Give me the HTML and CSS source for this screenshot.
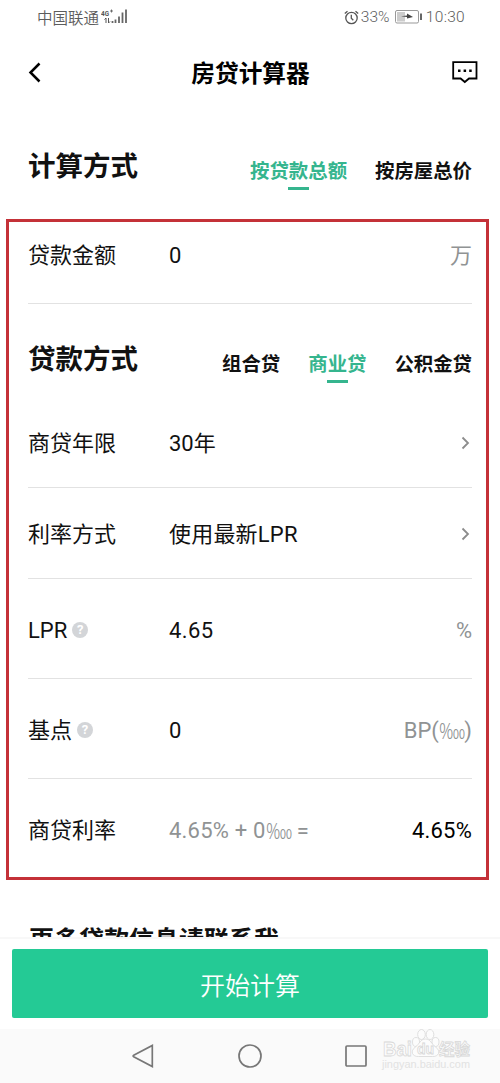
FILE: index.html
```html
<!DOCTYPE html>
<html lang="zh-CN">
<head>
<meta charset="utf-8">
<title>房贷计算器</title>
<link rel="stylesheet" href="styles.css">
</head>
<body>
<div class="phone">
  <div class="status">
    <span class="carrier">中国联通</span>
    <svg class="signal" width="28" height="18" viewBox="0 0 28 18">
      <text x="0" y="7.5" class="net" textLength="8" lengthAdjust="spacingAndGlyphs">4G</text>
      <path d="M9 3h3M10.500 1.500v3" stroke="#555" stroke-width=".8"/>
      <path d="M5 10v5M3.500 11.500L5 10M7.500 10v5M9 13.500L7.500 15" stroke="#555" fill="none"/>
      <path d="M11.500 13v2M14.500 11.500v3.500M18 8.500v6.500M21.500 4.500v10.500M25 1.500v13.500" stroke="#666" stroke-width="1.800"/>
    </svg>
    <span class="spacer"></span>
    <svg class="alarm" width="15" height="15" viewBox="0 0 15 15" fill="none" stroke="#555" stroke-width="1.300">
      <circle cx="7.500" cy="8" r="5.700"/><path d="M7.300 4.800v3.400l2 2M.8 3.500L3.500 1.200M14.200 3.500L11.500 1.200"/>
    </svg>
    <span class="pct">33%</span>
    <svg class="battery" width="28" height="14" viewBox="0 0 28 14">
      <rect x=".5" y=".5" width="23" height="12.500" rx="1.500" fill="#fff" stroke="#999"/>
      <rect x="2" y="2" width="8" height="9.500" fill="#ccc"/>
      <path d="M6 6.200l6-.7v-2l6 3.500-6 1.500v-1.500z" fill="#444"/>
      <path d="M26 3.500v6.500" stroke="#666" stroke-width="2"/>
    </svg>
    <span class="time">10:30</span>
  </div>

  <div class="navbar">
    <svg width="14" height="22" viewBox="0 0 14 22" fill="none" stroke="#000" stroke-width="2.500"><path d="M11.500 2.500L2.500 11.500l9 9"/></svg>
    <h1 class="title">房贷计算器</h1>
    <svg width="26" height="24" viewBox="0 0 26 24"><path d="M1.200 2.200h23.300v16.300h-7.500L12.800 22 8.600 18.500H1.200z" fill="none" stroke="#000" stroke-width="1.800"/><path d="M6 9.500h2.500v2.500H6zM11.600 9.500h2.500v2.500h-2.500zM17.200 9.500h2.500v2.500h-2.500z"/></svg>
  </div>

  <div class="section first">
    <h2 class="heading">计算方式</h2>
    <div class="tabs">
      <span class="tab active">按贷款总额</span>
      <span class="tab">按房屋总价</span>
    </div>
  </div>

  <div class="form">
    <div class="row amount"><span>贷款金额</span><span>0</span><span class="unit">万</span></div>
    <div class="section">
      <h2 class="heading">贷款方式</h2>
      <div class="tabs">
        <span class="tab">组合贷</span>
        <span class="tab active">商业贷</span>
        <span class="tab">公积金贷</span>
      </div>
    </div>
    <div class="row years"><span>商贷年限</span><span>30年</span><svg class="arrow" width="9" height="14" viewBox="0 0 9 14"><path d="M1.500 1.500L7 7l-5.500 5.500"/></svg></div>
    <div class="row method"><span>利率方式</span><span class="wide">使用最新LPR</span><svg class="arrow" width="9" height="14" viewBox="0 0 9 14"><path d="M1.500 1.500L7 7l-5.500 5.500"/></svg></div>
    <div class="row"><span class="label">LPR<i class="help">?</i></span><span class="num">4.65</span><span class="unit">%</span></div>
    <div class="row"><span class="label">基点<i class="help">?</i></span><span>0</span><span class="unit">BP(<span class="bp">‱</span>)</span></div>
    <div class="row result"><span>商贷利率</span><span class="formula">4.65% + 0<span class="bp">‱</span> =</span><span class="value">4.65%</span></div>
  </div>

  <div class="more">更多贷款信息请联系我</div>
  <div class="action"><div class="button">开始计算</div></div>

  <div class="system">
    <svg width="22" height="26" viewBox="0 0 22 26"><path d="M20.300 2.500v21L1.700 13.800q-1.200-.8 0-1.600z"/></svg>
    <svg width="26" height="26" viewBox="0 0 26 26"><circle cx="13" cy="13" r="11"/></svg>
    <svg width="24" height="26" viewBox="0 0 24 26"><rect x="2" y="3" width="20" height="20" rx="1"/></svg>
    <svg class="watermark" width="94" height="44" viewBox="0 0 94 44">
      <g class="paw">
        <ellipse cx="35" cy="14" rx="3.500" ry="4.500"/><ellipse cx="40.500" cy="6.500" rx="3.800" ry="5"/><ellipse cx="49" cy="6.500" rx="3.800" ry="5"/><ellipse cx="54.500" cy="14" rx="3.500" ry="4.500"/>
        <path d="M44.500 11c-5 0-6 5-10 8-6 4-3 10 3 9.500h14c6 .5 9-5.500 3-9.500-4-3-5-8-10-8z"/>
      </g>
      <text x="2" y="28" class="brand" textLength="29" lengthAdjust="spacingAndGlyphs">Bai</text>
      <text x="36" y="26" class="du">du</text>
      <text x="58" y="27" class="cn">经验</text>
      <text x="1" y="40" class="site" textLength="88" lengthAdjust="spacingAndGlyphs">jingyan.baidu.com</text>
    </svg>
  </div>
</div>
</body>
</html>
```
FILE: styles.css
```css
* { box-sizing: border-box; }
body { margin: 0; background: #fff; font-family: Roboto, "Noto Sans CJK SC", sans-serif; color: #111; }
.phone { width: 500px; height: 1083px; display: flex; flex-direction: column; overflow: hidden; }
.phone svg { flex: none; }

.status { height: 34px; flex: none; display: flex; align-items: center; padding: 0 35px 0 37px; font-size: 15.5px; color: #5c5c5c; font-weight: 350; white-space: nowrap; }
.signal { margin-left: 2px; }
.net { font: 700 8px Roboto, sans-serif; fill: #555; }
.spacer { flex: 1; }
.alarm { margin-right: 2px; }
.pct { width: 30px; }
.battery { margin: 0 3px 0 4px; }
.time { letter-spacing: .3px; }

.navbar { height: 76px; flex: none; display: flex; align-items: center; justify-content: space-between; padding: 0 22px 0 28px; }
.title { margin: 4px 0 0; padding-left: 7px; font-size: 23.700px; line-height: 34px; font-weight: 700; color: #000; }

.section { height: 94px; flex: none; display: flex; justify-content: space-between; align-items: flex-start; padding-top: 37px; }
.section.first { height: 109px; padding: 38px 28px 0; }
.heading { margin: 0; font-size: 27.500px; line-height: 38px; font-weight: 700; }
.tabs { display: flex; gap: 28px; padding-top: 9px; }
.tab { font-size: 19.400px; line-height: 30px; font-weight: 700; white-space: nowrap; }
.tab.active { color: #35b58e; display: flex; flex-direction: column; align-items: center; }
.tab.active::after { content: ""; width: 21px; height: 3px; background: #35b58e; }

.form { width: 483px; height: 661px; flex: none; margin-left: 6px; border: 3px solid #c43138; padding: 0 14px 0 19px; }
.row { height: 100px; display: grid; grid-template-columns: 141px 1fr auto; align-items: center; border-bottom: 1px solid #e2e2e2; font-size: 22px; line-height: 32px; font-weight: 380; white-space: nowrap; padding-top: 5px; }
.amount { height: 82px; padding: 0 0 13px; }
.years { height: 90px; padding-top: 2px; }
.method { height: 91px; padding-top: 4px; }
.result { border: 0; padding-top: 4px; }
.label { display: flex; align-items: center; }
.help { width: 16px; height: 16px; margin: 0 0 2px 5px; border-radius: 50%; background: #d3d5d8; color: #fff; font-size: 13px; font-weight: 700; font-style: normal; line-height: 16px; text-align: center; }
.num { letter-spacing: .4px; }
.wide { letter-spacing: .2px; }
.unit, .formula { color: #909394; }
.formula { letter-spacing: .2px; }
.bp { display: inline-block; width: 25.500px; height: 32px; margin-top: -1px; vertical-align: top; font-family: "Noto Sans", "Open Sans", sans-serif; font-weight: 300; transform-origin: left; transform: scaleX(.8); }
.value { color: #000; letter-spacing: .2px; }
.arrow { fill: none; stroke: #8c8c8c; stroke-width: 1.800; margin: 0 2px 2px 0; }

.more { height: 57px; flex: none; overflow: hidden; padding: 42px 0 0 29px; font-size: 25px; line-height: 37px; font-weight: 700; }
.action { height: 92px; flex: none; padding: 10px 12px 0; border-top: 2px solid #f8f8f8; background: #fff; }
.button { height: 69px; border-radius: 2px; background: #24ca95; color: #fff; font-size: 25px; line-height: 75px; font-weight: 350; text-align: center; }

.system { flex: 1; display: flex; align-items: center; background: #fafafa; padding-left: 132px; }
.system > svg { fill: none; stroke: #777; stroke-width: 1.700; }
.system > svg:nth-child(2) { margin-left: 83px; }
.system > svg:nth-child(3) { margin-left: 81px; }
.system .watermark { margin: -12px 0 0 13px; stroke: #dcdcdc; stroke-width: 1; }
.paw, .brand, .du, .cn { fill: #fcfcfc; stroke: #d8d8d8; stroke-width: .8; }
.brand { font: 700 21px "Liberation Sans", sans-serif; }
.du { font: 700 14px "Liberation Sans", sans-serif; }
.cn { font: 700 15.500px "Noto Sans CJK SC", sans-serif; }
.site { font: 400 11px "Liberation Sans", sans-serif; fill: #e2e2e2; stroke: none; }
```
